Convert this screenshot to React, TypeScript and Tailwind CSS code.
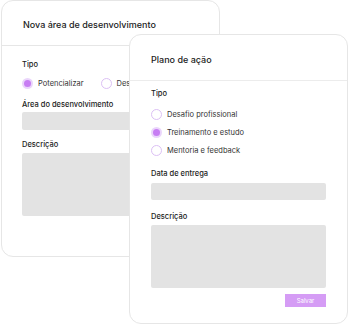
import React from 'react';

function Radio({ label, checked }: { label: string; checked?: boolean }) {
  return (
    <div className="flex items-center gap-[5px]">
      {checked ? (
        <span className="w-[11px] h-[11px] rounded-full bg-[#ead5fb] flex items-center justify-center shrink-0">
          <span className="w-[7px] h-[7px] rounded-full bg-[#c77df3]" />
        </span>
      ) : (
        <span className="w-[11px] h-[11px] rounded-full border border-[#dcc0f5] bg-white shrink-0" />
      )}
      <span className="text-[7.5px] text-[#333] whitespace-nowrap">{label}</span>
    </div>
  );
}

function Label({ children }: { children: React.ReactNode }) {
  return <div className="text-[7.5px] font-medium text-[#222] leading-none">{children}</div>;
}

export default function App() {
  return (
    <div
      className="relative w-[350px] h-[324px] bg-white overflow-hidden"
      style={{ fontFamily: 'Inter, "Noto Sans", sans-serif' }}
    >
      {/* back card */}
      <div className="absolute left-[1px] top-0 w-[219px] h-[257px] rounded-[12px] border border-[#e6e6e6] bg-white">
        <div className="h-[45px] border-b border-[#e6e6e6] pl-[21px] pt-[4px] flex items-center">
          <span className="text-[9px] font-medium text-[#222]">Nova área de desenvolvimento</span>
        </div>
        <div className="pl-[20px] pt-[15px]">
          <Label>Tipo</Label>
          <div className="flex gap-[17px] mt-[9px]">
            <Radio label="Potencializar" checked />
            <Radio label="Desenvolver" />
          </div>
          <div className="mt-[12px]">
            <Label>Área do desenvolvimento</Label>
          </div>
          <div className="mt-[4px] h-[18px] w-[200px] bg-[#e3e3e3] rounded-[2px]" />
          <div className="mt-[11px]">
            <Label>Descrição</Label>
          </div>
          <div className="mt-[4px] h-[63px] w-[200px] bg-[#e3e3e3] rounded-[2px]" />
        </div>
      </div>

      {/* front card */}
      <div className="absolute left-[129px] top-[34px] w-[219px] h-[290px] rounded-[12px] border border-[#e6e6e6] bg-white">
        <div className="h-[46px] border-b border-[#ececec] pl-[21px] pt-[4px] flex items-center">
          <span className="text-[9px] font-medium text-[#222]">Plano de ação</span>
        </div>
        <div className="px-[21px] pt-[9px]">
          <Label>Tipo</Label>
          <div className="flex flex-col gap-[7px] mt-[11px]">
            <Radio label="Desafio profissional" />
            <Radio label="Treinamento e estudo" checked />
            <Radio label="Mentoria e feedback" />
          </div>
          <div className="mt-[14px]">
            <Label>Data de entrega</Label>
          </div>
          <div className="mt-[5px] h-[17px] bg-[#e3e3e3] rounded-[2px]" />
          <div className="mt-[13px]">
            <Label>Descrição</Label>
          </div>
          <div className="mt-[5px] h-[63px] bg-[#e3e3e3] rounded-[2px]" />
          <div className="flex justify-end mt-[6px]">
            <div className="w-[41px] h-[13px] bg-[#d59cf5] flex items-center justify-center text-[6px] text-white">
              Salvar
            </div>
          </div>
        </div>
      </div>
    </div>
  );
}
